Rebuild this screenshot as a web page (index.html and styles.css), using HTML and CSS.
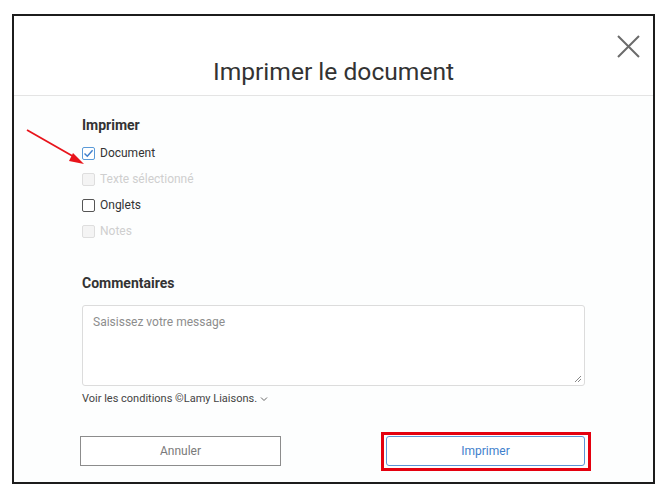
FILE: index.html
```html
<!DOCTYPE html>
<html lang="fr">
<head>
<meta charset="utf-8">
<title>Imprimer le document</title>
<link rel="stylesheet" href="styles.css">
</head>
<body>
<div class="frame">
  <div class="header">
    <h1 class="title">Imprimer le document</h1>
    <button class="close" aria-label="Fermer">
      <svg width="23" height="23" viewBox="0 0 23 23"><path d="M1 1 L22 22 M22 1 L1 22" stroke="#6b6b6b" stroke-width="2" fill="none"/></svg>
    </button>
  </div>
  <div class="body">
    <h2 class="section">Imprimer</h2>
    <label class="row"><span class="box checked"><svg width="11" height="11" viewBox="0 0 11 11"><path d="M1.5 5.5 L4.3 8.3 L9.6 2.2" stroke="#3f7fcc" stroke-width="1.4" fill="none"/></svg></span>Document</label>
    <label class="row disabled"><span class="box"></span>Texte sélectionné</label>
    <label class="row"><span class="box"></span>Onglets</label>
    <label class="row disabled"><span class="box"></span>Notes</label>

    <h2 class="section comments">Commentaires</h2>
    <div class="textarea"><span class="placeholder">Saisissez votre message</span>
      <svg class="grip" width="8" height="8" viewBox="0 0 8 8"><path d="M7 1 L1 7 M7 4 L4 7" stroke="#888" stroke-width="1"/></svg>
    </div>
    <div class="cond">Voir les conditions ©Lamy Liaisons. <svg width="8" height="6" viewBox="0 0 8 6"><path d="M1 1.5 L4 4.5 L7 1.5" stroke="#666" stroke-width="1" fill="none"/></svg></div>

    <div class="actions">
      <button class="btn cancel">Annuler</button>
      <button class="btn primary">Imprimer</button>
    </div>
  </div>
  <svg class="arrow" width="60" height="40" viewBox="0 0 60 40"><path d="M1 2 L50 30" stroke="#e8141b" stroke-width="1.8"/><path d="M58 36 L47 25 L43 33 Z" fill="#e8141b"/></svg>
</div>
</body>
</html>
```
FILE: styles.css
```css
* { box-sizing: border-box; }
body {
  margin: 0;
  background: #ffffff;
  font-family: Roboto, "Liberation Sans", Arial, sans-serif;
  color: #333;
}
.frame {
  position: relative;
  margin: 14px 0 0 12px;
  width: 643px;
  height: 470px;
  border: 2px solid #1c1c1c;
  background: #fdfefe;
}
.header {
  position: relative;
  height: 80px;
  padding-top: 42px;
  border-bottom: 1px solid #e4e4e4;
  background: #fff;
}
.title {
  margin: 0;
  text-align: center;
  font-size: 24.6px;
  line-height: 28px;
  font-weight: 400;
  color: #333;
}
.close {
  position: absolute;
  top: 19px;
  right: 13px;
  width: 23px;
  height: 23px;
  padding: 0;
  border: 0;
  background: none;
}
.close svg { display: block; }
.body {
  padding: 21px 0 0 68px;
  width: 571px;
}
.section {
  margin: 0 0 7px;
  font-size: 14px;
  line-height: 16px;
  font-weight: 700;
  color: #333;
}
.comments { margin-top: 31px; margin-bottom: 14px; }
.row {
  display: flex;
  align-items: center;
  height: 26px;
  font-size: 12px;
  color: #333;
}
.box {
  width: 13px;
  height: 13px;
  margin-right: 5px;
  border: 1px solid #555;
  border-radius: 2px;
  background: #fff;
  display: flex;
  align-items: center;
  justify-content: center;
}
.box.checked { border-color: #5a9ad8; }
.row.disabled { color: #cfcfcf; }
.row.disabled .box { border-color: #dedede; background: #f4f4f4; }
.textarea {
  position: relative;
  height: 81px;
  width: 503px;
  border: 1px solid #dcdcdc;
  border-radius: 3px;
  background: #fff;
  padding: 5px 10px;
}
.placeholder {
  font-size: 12px;
  line-height: 14px;
  color: #8d8d8d;
}
.grip { position: absolute; right: 2px; bottom: 2px; }
.cond {
  margin-top: 6px;
  font-size: 11px;
  line-height: 14px;
  color: #444;
  display: flex;
  align-items: center;
  gap: 3px;
}
.actions {
  margin: 30px 0 0 -2px;
  width: 505px;
  display: flex;
  justify-content: space-between;
}
.btn {
  height: 30px;
  font-family: inherit;
  font-size: 12px;
  background: #fff;
  cursor: pointer;
}
.cancel {
  width: 201px;
  border: 1px solid #8c8c8c;
  color: #7a7a7a;
}
.primary {
  position: relative;
  width: 199px;
  border: 1px solid #5b95d6;
  border-radius: 3px;
  color: #3f7fcc;
}
.primary::after {
  content: "";
  position: absolute;
  left: -6px;
  right: -7px;
  top: -5px;
  bottom: -6px;
  border: 3px solid #e4000f;
}
.arrow {
  position: absolute;
  left: 12px;
  top: 112px;
}
```
